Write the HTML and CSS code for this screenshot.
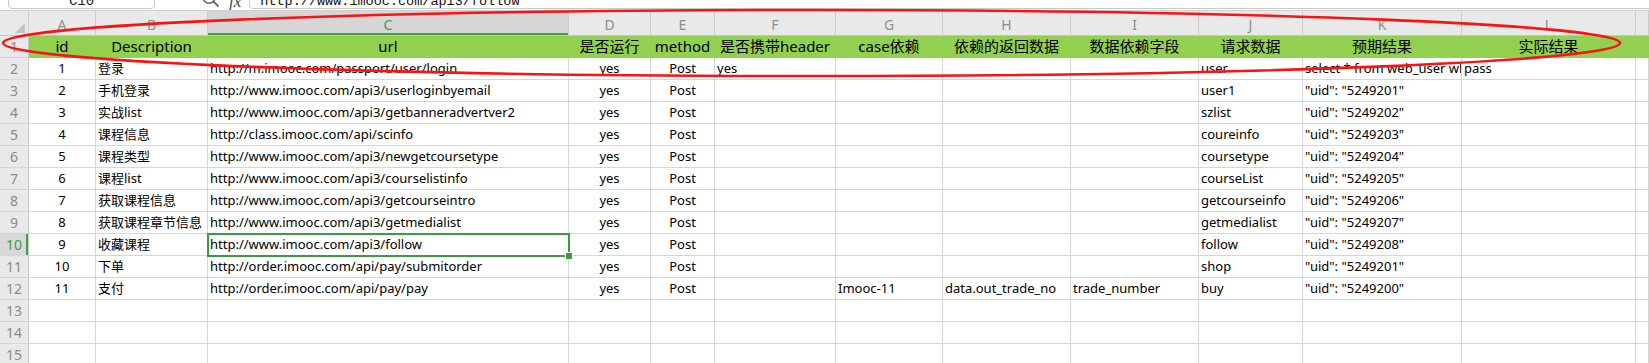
FILE: index.html
```html
<!DOCTYPE html>
<html lang="zh-CN">
<head>
<meta charset="utf-8">
<title>Sheet</title>
<link rel="stylesheet" href="styles.css">
</head>
<body>
<div class="toolbar">
  <div class="namebox">C10</div>
  <svg class="search" width="18" height="18" viewBox="0 0 18 18">
    <circle cx="6" cy="6" r="6.2" fill="none" stroke="#6a6a6a" stroke-width="1.5"/>
    <path d="M10.5 10.5 L15 15" stroke="#6a6a6a" stroke-width="1.8" stroke-linecap="round"/>
  </svg>
  <span class="fx">fx</span>
  <div class="formula">http://www.imooc.com/api3/follow</div>
</div>

<div class="sheet">
  <div class="row colhead">
    <div class="corner"><span class="tri"></span></div>
    <div>A</div><div>B</div><div class="cur">C</div><div>D</div><div>E</div><div>F</div><div>G</div><div>H</div><div>I</div><div>J</div><div>K</div><div>L</div><div></div>
  </div>
  <div class="row head">
    <div class="rh">1</div>
    <div>id</div><div>Description</div><div>url</div><div>是否运行</div><div>method</div><div>是否携带header</div><div>case依赖</div><div>依赖的返回数据</div><div>数据依赖字段</div><div>请求数据</div><div>预期结果</div><div>实际结果</div><div></div>
  </div>
  <div class="row">
    <div class="rh">2</div>
    <div>1</div><div>登录</div><div>http://m.imooc.com/passport/user/login</div><div>yes</div><div>Post</div><div>yes</div><div></div><div></div><div></div><div>user</div><div class="clip">select * from web_user where id=1</div><div>pass</div><div></div>
  </div>
  <div class="row">
    <div class="rh">3</div>
    <div>2</div><div>手机登录</div><div>http://www.imooc.com/api3/userloginbyemail</div><div>yes</div><div>Post</div><div></div><div></div><div></div><div></div><div>user1</div><div>"uid": "5249201"</div><div></div><div></div>
  </div>
  <div class="row">
    <div class="rh">4</div>
    <div>3</div><div>实战list</div><div>http://www.imooc.com/api3/getbanneradvertver2</div><div>yes</div><div>Post</div><div></div><div></div><div></div><div></div><div>szlist</div><div>"uid": "5249202"</div><div></div><div></div>
  </div>
  <div class="row">
    <div class="rh">5</div>
    <div>4</div><div>课程信息</div><div>http://class.imooc.com/api/scinfo</div><div>yes</div><div>Post</div><div></div><div></div><div></div><div></div><div>coureinfo</div><div>"uid": "5249203"</div><div></div><div></div>
  </div>
  <div class="row">
    <div class="rh">6</div>
    <div>5</div><div>课程类型</div><div>http://www.imooc.com/api3/newgetcoursetype</div><div>yes</div><div>Post</div><div></div><div></div><div></div><div></div><div>coursetype</div><div>"uid": "5249204"</div><div></div><div></div>
  </div>
  <div class="row">
    <div class="rh">7</div>
    <div>6</div><div>课程list</div><div>http://www.imooc.com/api3/courselistinfo</div><div>yes</div><div>Post</div><div></div><div></div><div></div><div></div><div>courseList</div><div>"uid": "5249205"</div><div></div><div></div>
  </div>
  <div class="row">
    <div class="rh">8</div>
    <div>7</div><div>获取课程信息</div><div>http://www.imooc.com/api3/getcourseintro</div><div>yes</div><div>Post</div><div></div><div></div><div></div><div></div><div>getcourseinfo</div><div>"uid": "5249206"</div><div></div><div></div>
  </div>
  <div class="row">
    <div class="rh">9</div>
    <div>8</div><div>获取课程章节信息</div><div>http://www.imooc.com/api3/getmedialist</div><div>yes</div><div>Post</div><div></div><div></div><div></div><div></div><div>getmedialist</div><div>"uid": "5249207"</div><div></div><div></div>
  </div>
  <div class="row">
    <div class="rh cur">10</div>
    <div>9</div><div>收藏课程</div><div class="sel">http://www.imooc.com/api3/follow</div><div>yes</div><div>Post</div><div></div><div></div><div></div><div></div><div>follow</div><div>"uid": "5249208"</div><div></div><div></div>
  </div>
  <div class="row">
    <div class="rh">11</div>
    <div>10</div><div>下单</div><div>http://order.imooc.com/api/pay/submitorder</div><div>yes</div><div>Post</div><div></div><div></div><div></div><div></div><div>shop</div><div>"uid": "5249201"</div><div></div><div></div>
  </div>
  <div class="row">
    <div class="rh">12</div>
    <div>11</div><div>支付</div><div>http://order.imooc.com/api/pay/pay</div><div>yes</div><div>Post</div><div></div><div>Imooc-11</div><div>data.out_trade_no</div><div>trade_number</div><div>buy</div><div>"uid": "5249200"</div><div></div><div></div>
  </div>
  <div class="row">
    <div class="rh">13</div>
    <div></div><div></div><div></div><div></div><div></div><div></div><div></div><div></div><div></div><div></div><div></div><div></div><div></div>
  </div>
  <div class="row">
    <div class="rh">14</div>
    <div></div><div></div><div></div><div></div><div></div><div></div><div></div><div></div><div></div><div></div><div></div><div></div><div></div>
  </div>
  <div class="row">
    <div class="rh">15</div>
    <div></div><div></div><div></div><div></div><div></div><div></div><div></div><div></div><div></div><div></div><div></div><div></div><div></div>
  </div>
</div>

<svg class="mark" width="1649" height="363" viewBox="0 0 1649 363">
  <ellipse cx="811.5" cy="43" rx="808.5" ry="33" fill="none" stroke="#fb1212" stroke-width="2.6"/>
</svg>
</body>
</html>
```
FILE: styles.css
```css
* {
  box-sizing: border-box;
  margin: 0;
  padding: 0;
}

body {
  width: 1649px;
  height: 363px;
  overflow: hidden;
  position: relative;
  background: #ffffff;
  font-family: "Noto Sans", "Noto Sans CJK SC", sans-serif;
  color: #000;
}

/* ---------- formula toolbar (cut off at top) ---------- */
.toolbar {
  height: 11px;
  display: flex;
  align-items: flex-end;
  overflow: hidden;
  border-bottom: 1px solid #cfcfcf;
  padding-bottom: 1px;
  background: #ffffff;
}

.namebox {
  flex: none;
  margin-left: 8px;
  width: 147px;
  height: 24px;
  border: 1px solid #c9c9c9;
  border-radius: 4px;
  font-family: "Liberation Mono", monospace;
  font-size: 14px;
  line-height: 14px;
  padding-top: 8px;
  text-align: center;
  color: #222;
}

.search {
  flex: none;
  margin-left: 48px;
  margin-bottom: 0;
}

.fx {
  flex: none;
  margin-left: 8px;
  font-family: "Liberation Serif", serif;
  font-style: italic;
  font-size: 17px;
  line-height: 17px;
  margin-bottom: -1px;
  color: #444;
}

.formula {
  flex: 1;
  margin-left: 8px;
  margin-right: -6px;
  height: 24px;
  border: 1px solid #c9c9c9;
  border-radius: 4px;
  padding-left: 10px;
  font-family: "Liberation Mono", monospace;
  font-size: 13.5px;
  line-height: 14px;
  padding-top: 9px;
  color: #111;
  white-space: nowrap;
}

/* ---------- sheet grid ---------- */
.sheet {
  --cols: 29px 67px 112px 361px 82px 64px 121px 107px 128px 128px 104px 159px 174px 1fr;
}

.row {
  display: grid;
  grid-template-columns: var(--cols);
  height: 22px;
}

.row > div {
  border-right: 1px solid #d6d6d6;
  border-bottom: 1px solid #d6d6d6;
  font-size: 13px;
  line-height: 21px;
  padding: 0 2px;
  white-space: nowrap;
  overflow: hidden;
}

.row > .clip {
  padding-right: 0;
  text-overflow: clip;
}

.row > :nth-child(2),
.row > :nth-child(5),
.row > :nth-child(6) {
  text-align: center;
}

/* column letters */
.colhead {
  height: 25px;
}

.colhead > div {
  background: #e9e9e9;
  border-right-color: #cdcdcd;
  border-bottom-color: #c4c4c4;
  color: #8e8e8e;
  font-size: 14px;
  line-height: 20px;
  padding-top: 4px;
  text-align: center;
}

.colhead > .cur {
  background: #d6d6d6;
  color: #3b9d3f;
  box-shadow: inset 0 -2px 0 #3fa045;
}

.corner {
  display: flex;
  justify-content: flex-end;
  align-items: flex-end;
  padding: 0 3px 2px 0 !important;
}

.tri {
  display: block;
  width: 10px;
  height: 10px;
  background: #c3c3c3;
  clip-path: polygon(100% 0, 100% 100%, 0 100%);
}

/* row numbers */
.row > .rh {
  background: #e9e9e9;
  border-right-color: #c8c8c8;
  border-bottom-color: #d6d6d6;
  color: #8a8a8a;
  font-size: 14px;
  text-align: center;
  padding: 0;
}

.row > .rh.cur {
  background: #d8d8d8;
  color: #3b9d3f;
  box-shadow: inset -2px 0 0 #3fa045;
}

/* header row (green fill) */
.head > div {
  background: #92d050;
  border-right-color: #92d050;
  border-bottom-color: #92d050;
  font-size: 15px;
  text-align: center;
  padding: 0;
}

.head > .rh {
  background: #e9e9e9;
  border-bottom-color: #d6d6d6;
}

/* active cell */
.row > .sel {
  position: relative;
  overflow: visible;
}

.sel::after {
  content: "";
  position: absolute;
  left: -1px;
  top: -1px;
  right: -2px;
  bottom: -2px;
  border: 2px solid #3a9b40;
  z-index: 2;
}

.sel::before {
  content: "";
  position: absolute;
  right: -5px;
  bottom: -5px;
  width: 6px;
  height: 6px;
  background: #3a9b40;
  border: 1px solid #ffffff;
  z-index: 3;
}

/* hand-drawn red annotation */
.mark {
  position: absolute;
  left: 0;
  top: 0;
  pointer-events: none;
  z-index: 5;
}
```
